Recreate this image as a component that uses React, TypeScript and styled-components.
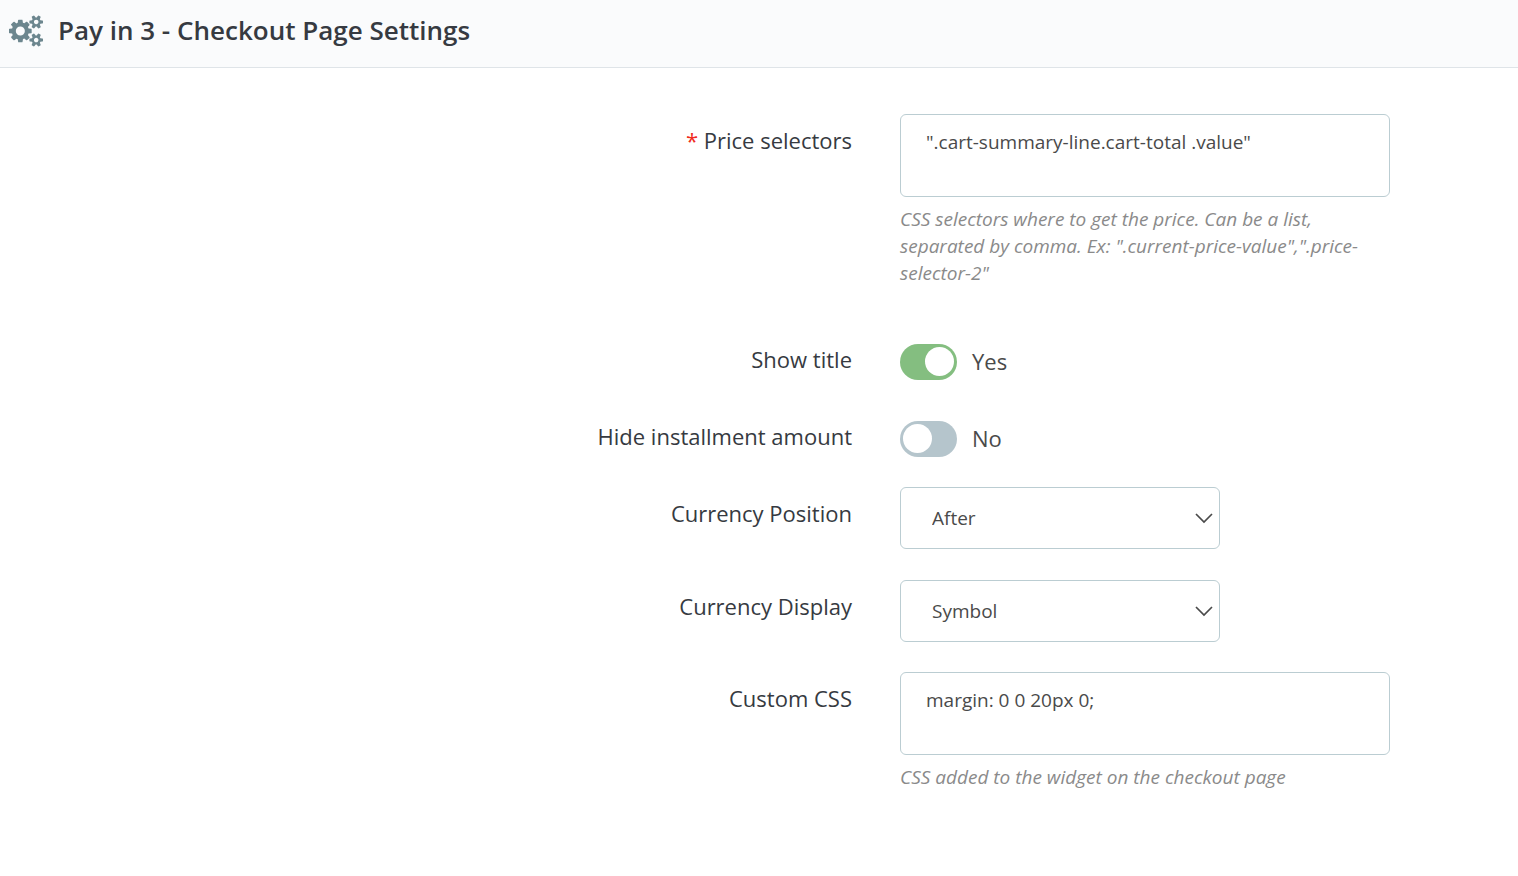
import React from "react";
import styled, { createGlobalStyle } from "styled-components";

const GlobalStyle = createGlobalStyle`
  *, *::before, *::after { box-sizing: border-box; }
  body { margin: 0; background: #fff; color: #363a41; font-family: "Open Sans", sans-serif; }
`;

const Header = styled.header`
  display: flex;
  align-items: center;
  gap: 15px;
  height: 68px;
  padding: 0 9px 6px;
  background: #fafbfc;
  border-bottom: 1px solid #dfe4e8;
`;

const HeaderIcon = styled.svg`
  flex: none;
  width: 34px;
  height: 32px;
  fill: #6c868e;
`;

const Title = styled.h1`
  margin: 0;
  padding-bottom: 2px;
  font-size: 26px;
  line-height: 34px;
  font-weight: 600;
`;

const Form = styled.form`
  padding: 46px 0 0;
`;

const Row = styled.div<{ $gap?: number }>`
  display: grid;
  grid-template-columns: 852fr 666fr;
  margin-bottom: ${(p) => p.$gap ?? 31}px;
`;

const Label = styled.label`
  padding-top: 10px;
  font-size: 22px;
  line-height: 32px;
  text-align: right;
`;

const Required = styled.span`
  color: #f02b1d;
`;

const Field = styled.div`
  padding: 0 128px 0 48px;
`;

const TextArea = styled.textarea`
  display: block;
  width: 100%;
  height: 83px;
  padding: 13px 25px;
  border: 1px solid #bbcdd2;
  border-radius: 6px;
  background: #fff;
  color: #4a4a4a;
  font-family: inherit;
  font-size: 19px;
  line-height: 28px;
  resize: none;
`;

const Help = styled.p`
  margin: 9px 0 0;
  color: #8a8a8a;
  font-size: 19px;
  line-height: 27px;
  font-style: italic;
`;

const SwitchLine = styled.div`
  display: flex;
  align-items: center;
  gap: 15px;
  padding-top: 11px;
`;

const SwitchState = styled.span`
  padding-bottom: 2px;
  color: #4a4a4a;
  font-size: 22px;
  line-height: 34px;
`;

const SwitchInput = styled.input`
  appearance: none;
  display: flex;
  width: 57px;
  height: 36px;
  margin: 0;
  padding: 3px;
  border-radius: 18px;
  background: #b5c5cc;
  &::before {
    content: "";
    width: 29px;
    height: 29px;
    border-radius: 50%;
    background: #fff;
  }
  &:checked { background: #84be80; justify-content: flex-end; }
`;

const SelectBox = styled.div`
  display: grid;
  align-items: center;
  width: 320px;
  > * { grid-area: 1 / 1; }
`;

const Select = styled.select`
  appearance: none;
  width: 100%;
  height: 62px;
  padding: 0 31px;
  border: 1px solid #bbcdd2;
  border-radius: 6px;
  background: #fff;
  color: #4a4a4a;
  font-family: inherit;
  font-size: 19px;
`;

const Chevron = styled.svg`
  justify-self: end;
  width: 18px;
  height: 12px;
  margin-right: 7px;
  pointer-events: none;
`;

const SMALL_GEAR =
  "v140q0 16-149 31-12 27-30 52 51 113 51 138 0 4-4 7-122 71-124 71-8 0-46-47t-52-68q-20 2-30 2t-30-2q-14 21-52 68t-46 47q-2 0-124-71-4-3-4-7 0-25 51-138-18-25-30-52-149-15-149-31v-140q0-16 149-31 13-29 30-52-51-113-51-138 0-4 4-7 4-2 35-20t59-34 30-16q8 0 46 46.500t52 67.500q20-2 30-2t30 2q51-71 92-112l6-2q4 0 124 70 4 3 4 7 0 25-51 138 17 23 30 52 149 15 149 31z";

const GEARS =
  "M896 896q0-106-75-181t-181-75-181 75-75 181 75 181 181 75 181-75 75-181zm768 512q0-52-38-90t-90-38-90 38-38 90q0 53 37.500 90.500t90.500 37.500 90.500-37.500 37.500-90.500zm0-1024q0-52-38-90t-90-38-90 38-38 90q0 53 37.500 90.500t90.500 37.500 90.500-37.500 37.500-90.500zm-384 421v185q0 10-7 19.500t-16 10.500l-155 24q-11 35-32 76 34 48 90 115 7 11 7 20 0 12-7 19-23 30-82.500 89.500t-78.500 59.500q-11 0-21-7l-115-90q-37 19-77 31-11 108-23 155-7 24-30 24h-186q-11 0-20-7.500t-10-17.500l-23-153q-34-10-75-31l-118 89q-7 7-20 7-11 0-21-8-144-133-144-160 0-9 7-19 10-14 41-53t47-61q-23-44-35-82l-152-24q-10-1-17-9.500t-7-19.500v-185q0-10 7-19.500t16-10.500l155-24q11-35 32-76-34-48-90-115-7-11-7-20 0-12 7-20 22-30 82-89t79-59q11 0 21 7l115 90q34-18 77-32 11-108 23-154 7-24 30-24h186q11 0 20 7.500t10 17.500l23 153q34 10 75 31l118-89q8-7 20-7 11 0 21 8 144 133 144 160 0 8-7 19-12 16-42 54t-45 60q23 48 34 82l152 23q10 2 17 10.500t7 19.500zm640 533" +
  SMALL_GEAR + "m0-1024" + SMALL_GEAR;

function TextRow(p: { id: string; label: string; value: string; help: string; required?: boolean; gap?: number }) {
  return (
    <Row $gap={p.gap}>
      <Label htmlFor={p.id}>{p.required && <Required>* </Required>}{p.label}</Label>
      <Field>
        <TextArea id={p.id} defaultValue={p.value} required={p.required} spellCheck={false} aria-describedby={p.id + "-help"} />
        <Help id={p.id + "-help"}>{p.help}</Help>
      </Field>
    </Row>
  );
}

function SwitchRow(p: { id: string; label: string; on: boolean }) {
  const [on, setOn] = React.useState(p.on);
  return (
    <Row $gap={30}>
      <Label htmlFor={p.id}>{p.label}</Label>
      <Field>
        <SwitchLine>
          <SwitchInput id={p.id} type="checkbox" role="switch" checked={on} onChange={(e) => setOn(e.target.checked)} />
          <SwitchState>{on ? "Yes" : "No"}</SwitchState>
        </SwitchLine>
      </Field>
    </Row>
  );
}

function SelectRow(p: { id: string; label: string; options: string[]; gap?: number }) {
  return (
    <Row $gap={p.gap}>
      <Label htmlFor={p.id}>{p.label}</Label>
      <Field>
        <SelectBox>
          <Select id={p.id}>{p.options.map((o) => <option key={o}>{o}</option>)}</Select>
          <Chevron viewBox="0 0 18 12" fill="none" stroke="#4a4a4a" strokeWidth="1.700" aria-hidden="true">
            <path d="M1 2l8 8 8-8" />
          </Chevron>
        </SelectBox>
      </Field>
    </Row>
  );
}

export default function App() {
  return (
    <>
      <GlobalStyle />
      <Header>
        <HeaderIcon viewBox="0 0 1920 1792" aria-hidden="true">
          <path d={GEARS} />
        </HeaderIcon>
        <Title>Pay in 3 - Checkout Page Settings</Title>
      </Header>
      <main>
        <Form>
          <TextRow id="price" label="Price selectors" required gap={46}
            value={'".cart-summary-line.cart-total .value"'}
            help={'CSS selectors where to get the price. Can be a list, separated by comma. Ex: ".current-price-value",".price-selector-2"'} />
          <SwitchRow id="title" label="Show title" on />
          <SwitchRow id="installment" label="Hide installment amount" on={false} />
          <SelectRow id="position" label="Currency Position" options={["After", "Before"]} />
          <SelectRow id="display" label="Currency Display" options={["Symbol", "Code"]} gap={30} />
          <TextRow id="css" label="Custom CSS" value="margin: 0 0 20px 0;" help="CSS added to the widget on the checkout page" />
        </Form>
      </main>
    </>
  );
}
